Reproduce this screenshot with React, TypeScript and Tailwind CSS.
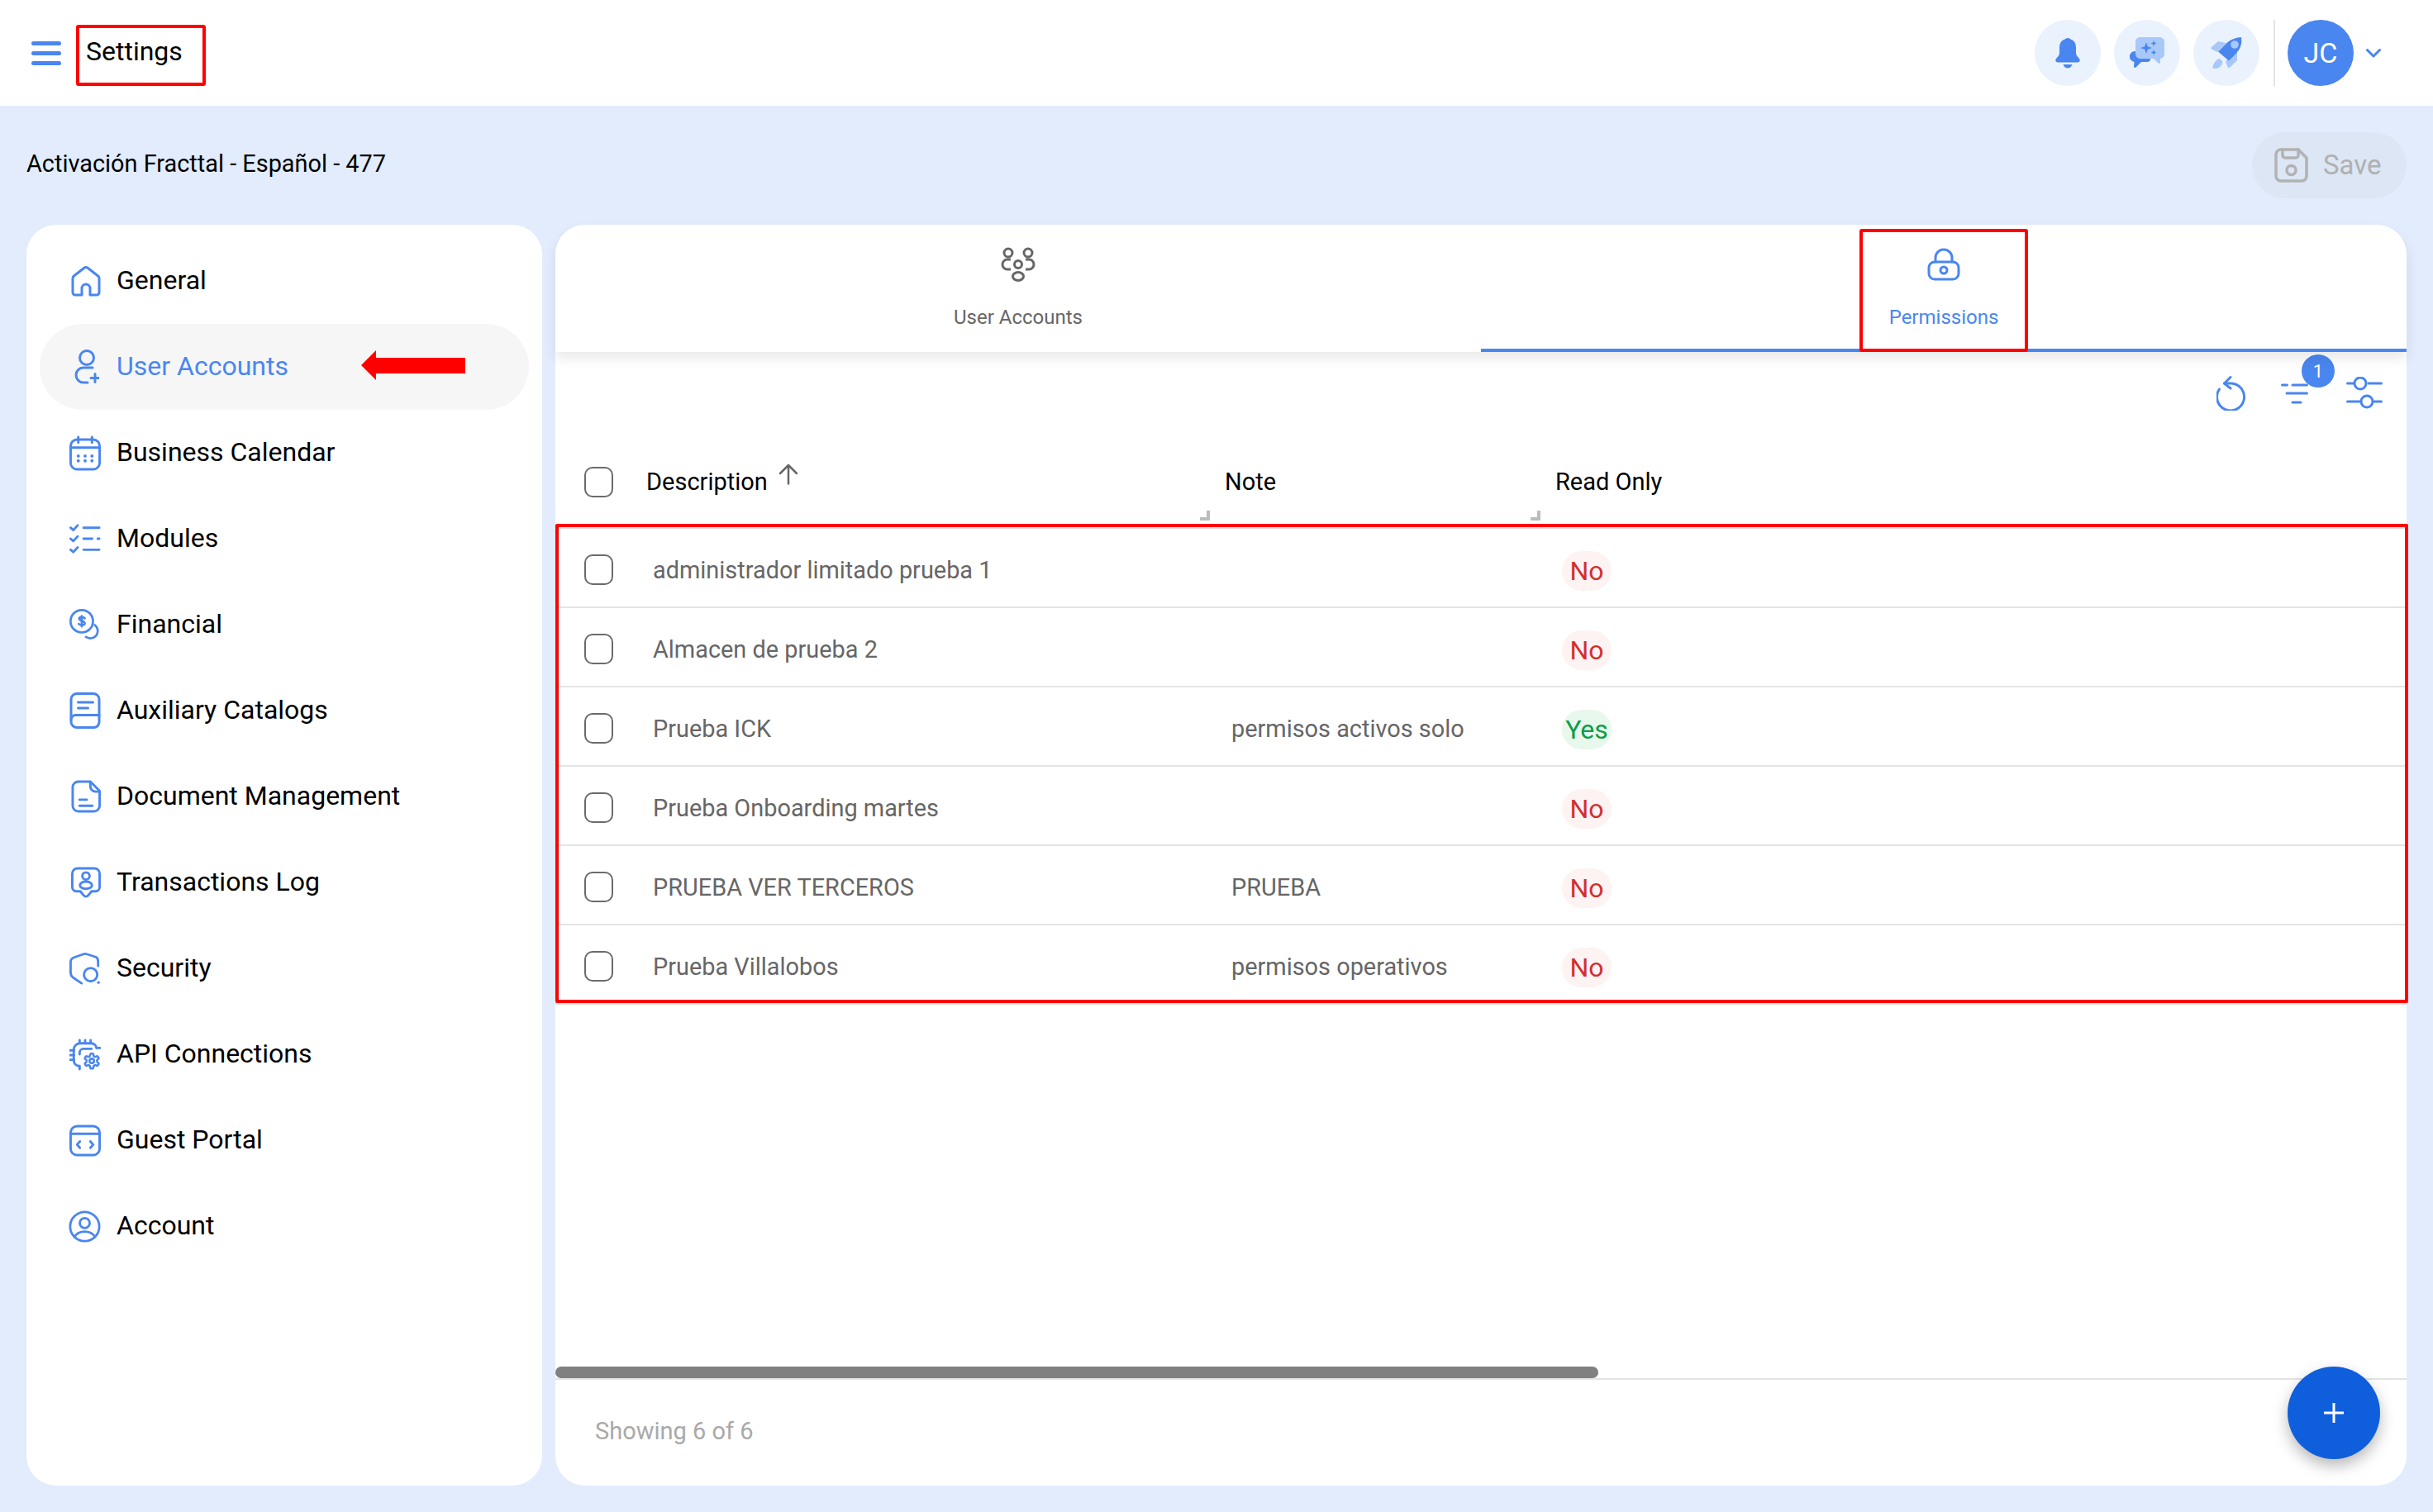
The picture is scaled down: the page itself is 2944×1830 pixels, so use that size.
import React from "react";

const BLUE = "#4a86ef";

const stroke = {
  fill: "none",
  stroke: BLUE,
  strokeWidth: 3,
  strokeLinecap: "round" as const,
  strokeLinejoin: "round" as const,
};

const HomeIcon = () => (
  <svg width="36" height="37" viewBox="0 0 36 37" {...stroke}>
    <path d="M13 35V27a5 5 0 0 1 10 0v8h8a3 3 0 0 0 3-3V15a4 4 0 0 0-1.4-3L20.5 2.5a4 4 0 0 0-5 0L3.4 12A4 4 0 0 0 2 15v17a3 3 0 0 0 3 3Z" />
  </svg>
);

const UserAddIcon = () => (
  <svg width="30" height="42" viewBox="0 0 30 42" {...stroke} className="ml-[4px]">
    <circle cx="15" cy="10" r="8.5" />
    <path d="M22 22H11a8.5 8.5 0 0 0 0 18h5" />
    <path d="M25 29.5v10M20 34.5h9.5" />
  </svg>
);

const CalendarIcon = () => (
  <svg width="39" height="43" viewBox="0 0 39 43" {...stroke} className="ml-[-2px]">
    <rect x="1.5" y="4.5" width="36" height="37" rx="8" />
    <path d="M2 14.5h35M11 1.5v7M28 1.5v7" />
    <g fill={BLUE} stroke="none">
      <circle cx="11" cy="25" r="2" />
      <circle cx="19.5" cy="25" r="2" />
      <circle cx="28" cy="25" r="2" />
      <circle cx="11" cy="31" r="2" />
      <circle cx="19.5" cy="31" r="2" />
      <circle cx="28" cy="31" r="2" />
    </g>
  </svg>
);

const ChecklistIcon = () => (
  <svg width="40" height="38" viewBox="0 0 40 38" {...stroke} className="ml-[-2px]">
    <path d="M1.5 5l3.5 3 5.5-6M1.5 19l3.5 3 5.5-6M1.5 33l3.5 3 5.5-6" />
    <path d="M18 5h20M18 19h11M36 19h2M18 33h20" />
  </svg>
);

const CoinsIcon = () => (
  <svg width="42" height="42" viewBox="0 0 42 42" {...stroke} className="ml-[-2px]">
    <circle cx="16.5" cy="16.5" r="15" />
    <path d="M20.500 12.500c-1-2-6.500-2.500-7.500 0-1 3.500 8 3 7.500 7-.5 2.500-6 2.500-8 .5M16.500 9.500v14" />
    <path d="M34 21.500c5 4 5 11 1 15-3.500 3.500-9 3.500-13 1" />
  </svg>
);

const CatalogIcon = () => (
  <svg width="38" height="44" viewBox="0 0 38 44" {...stroke} className="ml-[-2px]">
    <path d="M9 1.500h20a7 7 0 0 1 7 7V36a6.500 6.500 0 0 1-6.500 6.500H9A7 7 0 0 1 2 36V8.500a7 7 0 0 1 7-7Z" />
    <path d="M2 33a5.500 5.500 0 0 1 5.500-5.500H36" />
    <path d="M10.500 12h18M10.500 19h12" />
  </svg>
);

const DocumentIcon = () => (
  <svg width="37" height="40" viewBox="0 0 37 40" {...stroke}>
    <path d="M9 1.500h15L35.500 13v18.500a7 7 0 0 1-7 7H9a7 7 0 0 1-7-7v-23a7 7 0 0 1 7-7Z" />
    <path d="M24 2.500v5a6.500 6.500 0 0 0 6.500 6.500h5" />
    <path d="M10.500 24h9M10.500 31.500h16" />
  </svg>
);

const LogIcon = () => (
  <svg width="37" height="39" viewBox="0 0 37 39" {...stroke}>
    <path d="M8 1.500h21a6.500 6.500 0 0 1 6.500 6.500V25a5 5 0 0 1-5 5h-5l-4.500 5.500a3.500 3.500 0 0 1-5 0L11.500 30h-5a5 5 0 0 1-5-5V8A6.500 6.500 0 0 1 8 1.500Z" />
    <circle cx="18.500" cy="11" r="4.500" />
    <ellipse cx="18.500" cy="22.500" rx="7.500" ry="4.500" />
  </svg>
);

const ShieldIcon = () => (
  <svg width="40" height="41" viewBox="0 0 40 41" {...stroke} className="ml-[-2px]">
    <path d="M36.500 17V11c0-3-1-4.500-3-5.500L22 1.800a6 6 0 0 0-4 0L6 6C3 7 1.500 9 1.500 12v13c0 3 1 5 3 6.500l11 7.500" />
    <circle cx="27" cy="28" r="8.500" />
    <circle cx="37" cy="38" r="1.800" fill={BLUE} stroke="none" />
  </svg>
);

const ApiIcon = () => (
  <svg width="40" height="39" viewBox="0 0 40 39" {...stroke} className="ml-[-2px]">
    <path d="M12 34a8 8 0 0 1-6.500-7V13a8 8 0 0 1 8-8H28a7 7 0 0 1 6.500 6" />
    <path d="M13 19v-2a5 5 0 0 1 5-5h10" />
    <path d="M13 1v4M20 1v4M27 1v4M1 14h5M1 20h5M1 26h5M35 11h4M13 34v4" />
    <svg x="17" y="16" width="23" height="23" viewBox="0 0 24 24" strokeWidth="2.800">
      <path d="M12.220 2h-.44a2 2 0 0 0-2 2v.18a2 2 0 0 1-1 1.730l-.43.25a2 2 0 0 1-2 0l-.15-.08a2 2 0 0 0-2.730.73l-.22.38a2 2 0 0 0 .73 2.730l.15.1a2 2 0 0 1 1 1.720v.51a2 2 0 0 1-1 1.740l-.15.09a2 2 0 0 0-.73 2.730l.22.38a2 2 0 0 0 2.730.73l.15-.08a2 2 0 0 1 2 0l.43.25a2 2 0 0 1 1 1.730V20a2 2 0 0 0 2 2h.44a2 2 0 0 0 2-2v-.18a2 2 0 0 1 1-1.730l.43-.25a2 2 0 0 1 2 0l.15.08a2 2 0 0 0 2.730-.73l.22-.39a2 2 0 0 0-.73-2.730l-.15-.08a2 2 0 0 1-1-1.740v-.5a2 2 0 0 1 1-1.740l.15-.09a2 2 0 0 0 .73-2.730l-.22-.38a2 2 0 0 0-2.730-.73l-.15.08a2 2 0 0 1-2 0l-.43-.25a2 2 0 0 1-1-1.730V4a2 2 0 0 0-2-2z" />
      <circle cx="12" cy="12" r="3" />
    </svg>
  </svg>
);

const PortalIcon = () => (
  <svg width="39" height="39" viewBox="0 0 39 39" {...stroke} className="ml-[-2px]">
    <rect x="1.500" y="1.500" width="36" height="36" rx="8" />
    <path d="M2 11h35M13 20.500l-3.500 4 3.500 4M26 20.500l3.500 4-3.500 4" />
  </svg>
);

const AccountIcon = () => (
  <svg width="42" height="41" viewBox="0 0 42 41" {...stroke} className="ml-[-3px]">
    <circle cx="21" cy="20.500" r="19" />
    <circle cx="21" cy="16" r="6.500" />
    <path d="M7.500 34c3-5 8-7 13.500-7s10.500 2 13.500 7" />
  </svg>
);

const navItems = [
  { label: "General", icon: <HomeIcon /> },
  { label: "User Accounts", icon: <UserAddIcon />, active: true },
  { label: "Business Calendar", icon: <CalendarIcon /> },
  { label: "Modules", icon: <ChecklistIcon /> },
  { label: "Financial", icon: <CoinsIcon /> },
  { label: "Auxiliary Catalogs", icon: <CatalogIcon /> },
  { label: "Document Management", icon: <DocumentIcon /> },
  { label: "Transactions Log", icon: <LogIcon /> },
  { label: "Security", icon: <ShieldIcon /> },
  { label: "API Connections", icon: <ApiIcon /> },
  { label: "Guest Portal", icon: <PortalIcon /> },
  { label: "Account", icon: <AccountIcon /> },
];

const rows = [
  { name: "administrador limitado prueba 1", note: "", readOnly: false },
  { name: "Almacen de prueba 2", note: "", readOnly: false },
  { name: "Prueba ICK", note: "permisos activos solo", readOnly: true },
  { name: "Prueba Onboarding martes", note: "", readOnly: false },
  { name: "PRUEBA VER TERCEROS", note: "PRUEBA", readOnly: false },
  { name: "Prueba Villalobos", note: "permisos operativos", readOnly: false },
];

const Checkbox = () => (
  <div className="h-[37px] w-[35px] shrink-0 rounded-[10px] border-[2.5px] border-[#6b6b6b] bg-white" />
);

const ResizeHandle = () => (
  <div className="absolute bottom-[8px] right-[11px] h-[12px] w-[12px] border-b-4 border-r-4 border-[#bcbcbc]" />
);

const TopBar = () => (
  <header className="flex h-[128px] shrink-0 items-center bg-white pl-[38px] pr-[63px]">
    <svg width="36" height="29" viewBox="0 0 36 29" fill="none" stroke={BLUE} strokeWidth="5" strokeLinecap="round">
      <path d="M2.500 2.500h31M2.500 14.500h31M2.500 26.500h31" />
    </svg>
    <div className="ml-[18px] mt-[6px] h-[74px] w-[157px] rounded-[3px] border-4 border-[#ff0000] pl-[8px] pt-[9px] text-[32px] leading-[38px] text-black">
      Settings
    </div>
    <div className="ml-auto flex items-center">
      <div className="flex h-[80px] w-[80px] items-center justify-center rounded-full bg-[#eaf2fe]">
        <svg width="30" height="37" viewBox="0 0 30 37" fill={BLUE}>
          <path d="M15 0c-2 0-3 1.500-4.500 2C6 4 5 8 5 12v6c0 3-2 4.500-4 7-1.500 2-.5 4.500 2 4.500h24c2.500 0 3.500-2.500 2-4.500-2-2.500-4-4-4-7v-6c0-4-1-8-5.500-10C18 1.500 17 0 15 0Z" />
          <path d="M9.500 32h11c-1 3-3.500 4.500-5.500 4.500S10.500 35 9.500 32Z" />
        </svg>
      </div>
      <div className="ml-[16px] flex h-[80px] w-[80px] items-center justify-center rounded-full bg-[#eaf2fe]">
        <svg width="42" height="38" viewBox="0 0 42 38">
          <path fill={BLUE} d="M6 17h12c4 0 7 3 7 7v3c0 2-2 3-4 3H14l-6 6c-2 2-3 1-3-1l.5-5C2 29 0 27 0 24v-1c0-3 3-6 6-6Z" />
          <path fill="#a9c8fa" d="M13 0h23c3 0 6 2.500 6 6v14c0 3-2 5.500-5 6v4c0 2-1.500 2.500-3 1l-5-5H13c-3.500 0-6-2.500-6-6V6c0-3.500 2.500-6 6-6Z" />
          <path fill={BLUE} d="M20 6l1.800 5.200L27 13l-5.200 1.800L20 20l-1.800-5.200L13 13l5.200-1.800ZM29 4l1 2.500L32.500 7.500 30 8.500 29 11l-1-2.500L25.500 7.500 28 6.500ZM29 15l1 2.500 2.500 1-2.500 1-1 2.500-1-2.500-2.500-1 2.500-1Z" />
        </svg>
      </div>
      <div className="ml-[16px] flex h-[80px] w-[80px] items-center justify-center rounded-full bg-[#eaf2fe]">
        <svg width="38" height="38" viewBox="0 0 38 38">
          <path fill="#a9c8fa" d="M1 12l8-7 10 2-11 11-6-3c-2-1-2-2-1-3ZM32 18v10l-8 8c-2 2-3 1-4-1l-2-6ZM5 38c-3 0-3-1-2-4 2-5 5-8 8-8l3 3c1 3-2 9-9 9Z" />
          <path fill={BLUE} d="M37 0c1.500 8-1.500 15-7 20.500L22 28.500 9 17.500l9-9C23 3 30 .5 37 0Z" />
          <circle cx="29" cy="9" r="4.800" fill="#a9c8fa" />
        </svg>
      </div>
      <div className="ml-[17px] h-[80px] w-[2px] bg-[#e4e4e4]" />
      <div className="ml-[15px] flex h-[80px] w-[80px] items-center justify-center rounded-full bg-[#4a86ef] text-[34px] text-white">
        JC
      </div>
      <svg width="18" height="11" viewBox="0 0 18 11" fill="none" stroke={BLUE} strokeWidth="3" strokeLinecap="round" strokeLinejoin="round" className="ml-[15px]">
        <path d="M1.500 1.500L9 9l7.500-7.500" />
      </svg>
    </div>
  </header>
);

const SubBar = () => (
  <div className="flex h-[144px] shrink-0 items-center justify-between px-[32px]">
    <span className="mb-[3px] text-[28.9px] text-black">Activación Fracttal - Español - 477</span>
    <button className="flex h-[80px] w-[187px] items-center rounded-full bg-[#dce6f5] pl-[27px] text-[33px] text-[#b0b0b0]">
      <svg width="41" height="42" viewBox="0 0 41 42" fill="none" stroke="#b2b2b2" strokeWidth="3.500" strokeLinecap="round" strokeLinejoin="round">
        <path d="M8 2h21l10 10v22a6 6 0 0 1-6 6H8a6 6 0 0 1-6-6V8a6 6 0 0 1 6-6Z" />
        <path d="M10 2v7a3 3 0 0 0 3 3h13a3 3 0 0 0 3-3V2" />
        <circle cx="20.500" cy="27" r="5.500" />
      </svg>
      <span className="ml-[18px]">Save</span>
    </button>
  </div>
);

const Sidebar = () => (
  <aside className="flex w-[624px] shrink-0 flex-col rounded-[36px] bg-white p-4">
    {navItems.map((item) => (
      <div
        key={item.label}
        className={`relative flex h-[104px] shrink-0 items-center rounded-full pl-[38px] ${item.active ? "bg-[#f6f6f6] text-[#4a86ef]" : "text-black"}`}
      >
        <div className="flex w-[36px] shrink-0 items-center justify-start">{item.icon}</div>
        <span className="mb-[2px] ml-[19px] text-[32px] leading-[40px]">{item.label}</span>
        {item.active && (
          <svg width="126" height="36" viewBox="0 0 126 36" className="absolute left-[389px] top-[32px]">
            <path fill="#ff0000" d="M0 18L18 0v9h108v19H18v8Z" />
          </svg>
        )}
      </div>
    ))}
  </aside>
);

const Tabs = () => (
  <div className="relative z-10 flex h-[154px] shrink-0 rounded-t-[36px] bg-white shadow-[0_8px_16px_rgba(0,0,0,0.09)]">
    <div className="flex flex-1 flex-col items-center pt-[27px] text-[#666666]">
      <svg width="42" height="42" viewBox="0 0 42 42" fill="none" stroke="#666666" strokeWidth="3">
        <circle cx="9" cy="7" r="5" />
        <circle cx="33" cy="7" r="5" />
        <circle cx="21" cy="21" r="4.500" />
        <ellipse cx="21" cy="35.500" rx="6.500" ry="5" />
        <path d="M12 15H8a6 6 0 0 0 0 12h4M30 15h4a6 6 0 0 1 0 12h-4" />
      </svg>
      <span className="mt-[29px] text-[24px] leading-[28px]">User Accounts</span>
    </div>
    <div className="relative flex flex-1 flex-col items-center border-b-4 border-[#4a86ef] pt-[28px] text-[#4a86ef]">
      <svg width="40" height="40" viewBox="0 0 40 40" {...stroke}>
        <rect x="2" y="17" width="36" height="21" rx="7" />
        <path d="M10 17v-5a10 10 0 0 1 20 0v5" />
        <circle cx="20" cy="27" r="4" />
      </svg>
      <span className="mt-[30px] text-[24px] leading-[28px]">Permissions</span>
      <div className="absolute left-[458px] top-[5px] h-[149px] w-[204px] rounded-[3px] border-4 border-[#ff0000]" />
    </div>
  </div>
);

const Toolbar = () => (
  <div className="flex h-[100px] shrink-0 items-center justify-end pr-[29px]">
    <svg width="37" height="42" viewBox="0 0 37 42" {...stroke}>
      <path d="M9.500 9h9a16.500 16.500 0 1 1-15 7" />
      <path d="M17 1.500L9.500 9l7.500 6" />
    </svg>
    <div className="relative ml-[41px]">
      <svg width="33" height="26" viewBox="0 0 33 26" {...stroke}>
        <path d="M1.500 3h6M14 3h17.500M7 13h24.500M14 24h10" />
      </svg>
      <div className="absolute left-[25px] top-[-34px] flex h-[40px] w-[40px] items-center justify-center rounded-full bg-[#4a86ef] text-[22px] text-white">
        1
      </div>
    </div>
    <svg width="44" height="40" viewBox="0 0 44 40" {...stroke} className="ml-[46px]">
      <path d="M1.500 8h8M27 8h15.500M1.500 30h16M34 30h8.500" />
      <circle cx="17" cy="8" r="7" />
      <circle cx="25" cy="30" r="7" />
    </svg>
  </div>
);

const TableHeader = () => (
  <div className="flex h-[114px] shrink-0 items-stretch border-b-2 border-[#e0e0e0] pl-[35px] pt-[3px] text-[29px] text-black">
    <div className="flex items-center">
      <Checkbox />
    </div>
    <div className="relative ml-[32px] flex w-[701px] items-center pl-[8px]">
      <span>Description</span>
      <svg width="26" height="26" viewBox="0 0 26 26" fill="none" stroke="#666666" strokeWidth="2.500" strokeLinecap="round" strokeLinejoin="round" className="mb-[20px] ml-[12px]">
        <path d="M13 24.500V2M3 12L13 2l10 10" />
      </svg>
      <ResizeHandle />
    </div>
    <div className="relative flex w-[400px] items-center pl-[7px]">
      <span>Note</span>
      <ResizeHandle />
    </div>
    <div className="flex items-center pl-[7px]">
      <span>Read Only</span>
    </div>
  </div>
);

const TableRow = ({ name, note, readOnly }: { name: string; note: string; readOnly: boolean }) => (
  <div className="flex h-[96px] shrink-0 items-center border-b-2 border-[#e4e4e4] pl-[35px] pt-[5px] text-[28.9px] text-[#666666]">
    <Checkbox />
    <div className="ml-[32px] mt-[2px] w-[701px] pl-[16px]">{name}</div>
    <div className="mt-[2px] w-[400px] pl-[15px]">{note}</div>
    <div
      className={`ml-[15px] mt-[3px] flex h-[48px] w-[60px] items-center justify-center rounded-full text-[32px] ${readOnly ? "bg-[#e8f8ec] text-[#0c9d47]" : "bg-[#fdf3f2] text-[#d32f2f]"}`}
    >
      {readOnly ? "Yes" : "No"}
    </div>
  </div>
);

const App = () => {
  return (
    <div className="flex h-[1830px] w-[2944px] flex-col overflow-hidden bg-[#e2ecfd] font-['Roboto',sans-serif]">
      <TopBar />
      <SubBar />
      <div className="flex h-[1526px] shrink-0 gap-4 px-[32px]">
        <Sidebar />
        <main className="relative flex flex-1 flex-col rounded-[36px] bg-white">
          <Tabs />
          <Toolbar />
          <TableHeader />
          {rows.map((row) => (
            <TableRow key={row.name} {...row} />
          ))}
          <div className="absolute left-0 top-[362px] h-[580px] w-[2242px] rounded-[2px] border-4 border-[#ff0000]" />
          <div className="flex-1" />
          <div className="h-[14px] w-[1262px] shrink-0 rounded-full bg-[#808080]" />
          <div className="flex h-[130px] shrink-0 items-center border-t-2 border-[#e4e4e4] pb-[2px] pl-[48px] text-[29px] text-[#a9a9a9]">
            Showing 6 of 6
          </div>
          <button className="absolute bottom-[32px] right-[32px] flex h-[112px] w-[112px] items-center justify-center rounded-full bg-[#0f5fdc] shadow-[0_8px_18px_rgba(0,0,0,0.28)]">
            <svg width="24" height="24" viewBox="0 0 24 24" fill="none" stroke="#ffffff" strokeWidth="3">
              <path d="M12 0v24M0 12h24" />
            </svg>
          </button>
        </main>
      </div>
    </div>
  );
};

export default App;
